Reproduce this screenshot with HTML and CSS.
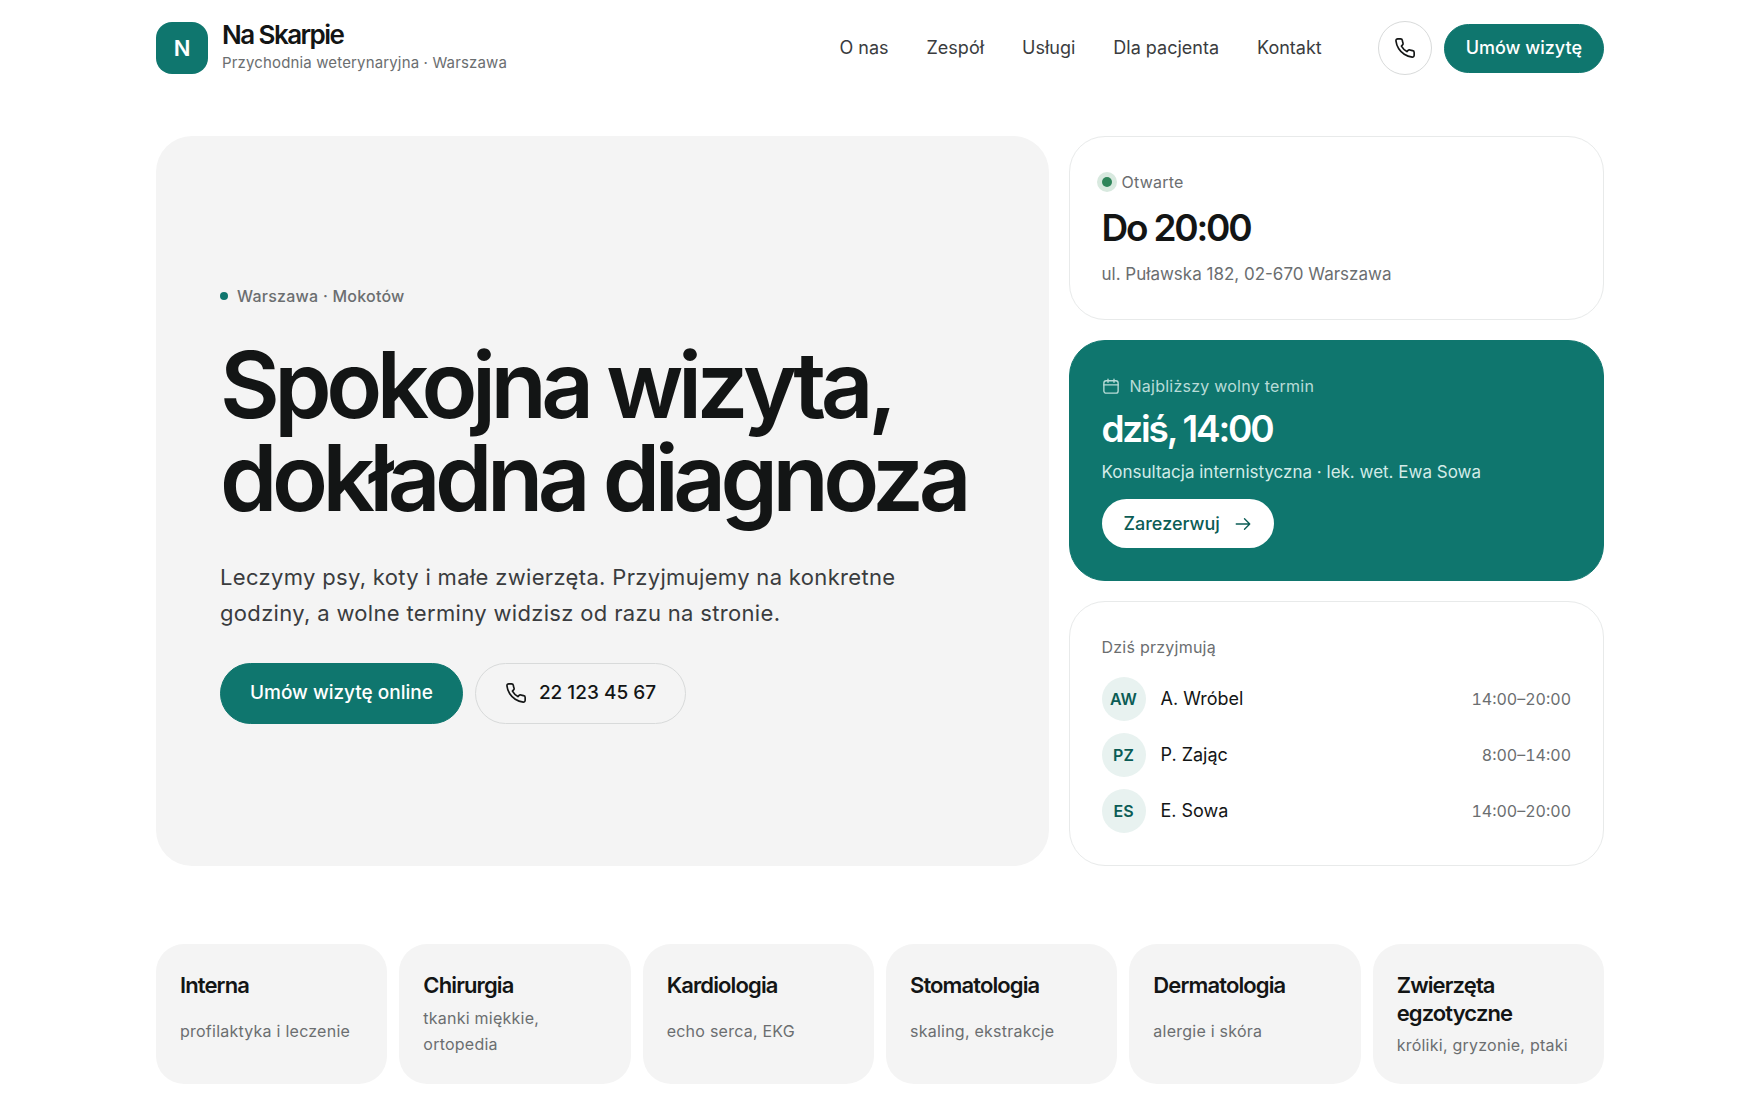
FILE: index.html
```html
<!DOCTYPE html>
<html lang="pl">
<head>
<meta charset="utf-8">
<meta name="viewport" content="width=device-width, initial-scale=1">
<title>Na Skarpie – przychodnia weterynaryjna</title>
<link rel="stylesheet" href="styles.css">
</head>
<body>
<svg class="sprite" aria-hidden="true">
  <symbol id="phone" viewBox="0 0 24 24"><path d="M22 16.92v3a2 2 0 0 1-2.18 2 19.79 19.79 0 0 1-8.63-3.07 19.5 19.5 0 0 1-6-6 19.79 19.79 0 0 1-3.07-8.67A2 2 0 0 1 4.11 2h3a2 2 0 0 1 2 1.72 12.84 12.84 0 0 0 .7 2.81 2 2 0 0 1-.45 2.11L8.09 9.91a16 16 0 0 0 6 6l1.27-1.27a2 2 0 0 1 2.11-.45 12.84 12.84 0 0 0 2.81.7A2 2 0 0 1 22 16.92z"/></symbol>
  <symbol id="calendar" viewBox="0 0 24 24"><rect x="2.5" y="5" width="19" height="16.5" rx="3"/><path d="M8 3v4M16 3v4M2.5 10.5h19"/></symbol>
  <symbol id="arrow" viewBox="0 0 24 24"><path d="M3 12h18M14 5l7 7-7 7"/></symbol>
</svg>
<header class="header container">
  <a class="brand" href="#">
    <span class="brand-mark">N</span>
    <span class="brand-text">
      <span class="brand-name">Na Skarpie</span>
      <span class="brand-sub">Przychodnia weterynaryjna · Warszawa</span>
    </span>
  </a>
  <nav class="nav">
    <a href="#o-nas">O nas</a>
    <a href="#zespol">Zespół</a>
    <a href="#uslugi">Usługi</a>
    <a href="#dla-pacjenta">Dla pacjenta</a>
    <a href="#kontakt">Kontakt</a>
  </nav>
  <div class="header-actions">
    <a class="icon-button" href="tel:+48221234567" aria-label="Zadzwoń"><svg class="icon icon-m"><use href="#phone"/></svg></a>
    <button class="button button-primary" type="button">Umów wizytę</button>
  </div>
</header>
<main class="container">
  <section class="top">
    <div class="hero">
      <p class="eyebrow">Warszawa · Mokotów</p>
      <h1>Spokojna wizyta, dokładna diagnoza</h1>
      <p class="lead">Leczymy psy, koty i małe zwierzęta. Przyjmujemy na konkretne godziny, a wolne terminy widzisz od razu na stronie.</p>
      <div class="hero-actions">
        <button class="button button-primary button-large" type="button">Umów wizytę online</button>
        <a class="button button-outline button-large" href="tel:+48221234567"><svg class="icon icon-m"><use href="#phone"/></svg>22 123 45 67</a>
      </div>
    </div>
    <div class="side">
      <article class="card">
        <p class="label label-status"><span class="status-dot"></span>Otwarte</p>
        <h2>Do 20:00</h2>
        <p class="detail">ul. Puławska 182, 02-670 Warszawa</p>
      </article>
      <article class="card card-accent">
        <p class="label"><svg class="icon icon-s"><use href="#calendar"/></svg>Najbliższy wolny termin</p>
        <h2>dziś, 14:00</h2>
        <p class="detail">Konsultacja internistyczna · lek. wet. Ewa Sowa</p>
        <button class="button button-light" type="button">Zarezerwuj<svg class="icon icon-s"><use href="#arrow"/></svg></button>
      </article>
      <article class="card card-team">
        <p class="label">Dziś przyjmują</p>
        <ul class="team">
          <li><span class="avatar">AW</span><span class="person">A. Wróbel</span><span class="hours">14:00–20:00</span></li>
          <li><span class="avatar">PZ</span><span class="person">P. Zając</span><span class="hours">8:00–14:00</span></li>
          <li><span class="avatar">ES</span><span class="person">E. Sowa</span><span class="hours">14:00–20:00</span></li>
        </ul>
      </article>
    </div>
  </section>
  <section class="services">
    <article class="service"><h3>Interna</h3><p>profilaktyka i leczenie</p></article>
    <article class="service"><h3>Chirurgia</h3><p>tkanki miękkie, ortopedia</p></article>
    <article class="service"><h3>Kardiologia</h3><p>echo serca, EKG</p></article>
    <article class="service"><h3>Stomatologia</h3><p>skaling, ekstrakcje</p></article>
    <article class="service"><h3>Dermatologia</h3><p>alergie i skóra</p></article>
    <article class="service"><h3>Zwierzęta egzotyczne</h3><p>króliki, gryzonie, ptaki</p></article>
  </section>
</main>
</body>
</html>
```
FILE: styles.css
```css
:root {
  --ink: #131515;
  --text: #3a3c3e;
  --muted: #6b6e70;
  --line: #e8eaea;
  --line-strong: #d8dada;
  --surface: #f4f4f4;
  --accent: #0f766e;
  --accent-soft: #e8f2f0;
}
* { box-sizing: border-box; }
body {
  margin: 0;
  background: #fff;
  color: var(--ink);
  font-family: Inter, "Liberation Sans", sans-serif;
  font-size: 18px;
  line-height: 26px;
}
h1, h2, h3, p, ul { margin: 0; padding: 0; }
a { color: inherit; text-decoration: none; }
.sprite { display: none; }
.container {
  width: calc(100% - 48px);
  max-width: 1448px;
  margin: 0 auto;
}
.icon {
  flex: none;
  fill: none;
  stroke: currentColor;
  stroke-width: 1.8;
  stroke-linecap: round;
  stroke-linejoin: round;
}
.icon-s { width: 18px; height: 18px; }
.icon-m { width: 22px; height: 22px; }

.header {
  display: flex;
  align-items: center;
  min-height: 96px;
}
.brand {
  display: flex;
  align-items: center;
  gap: 14px;
  margin-right: auto;
}
.brand-mark {
  display: grid;
  place-items: center;
  width: 52px;
  height: 52px;
  border-radius: 16px;
  background: var(--accent);
  color: #fff;
  font-size: 22px;
  font-weight: 600;
}
.brand-text { display: grid; }
.brand-name {
  font-size: 26px;
  line-height: 30px;
  font-weight: 600;
  letter-spacing: -0.06em;
}
.brand-sub {
  color: var(--muted);
  font-size: 15px;
  line-height: 26px;
  letter-spacing: 0.01em;
}
.nav {
  display: flex;
  gap: 38px;
  margin-right: 56px;
  color: var(--text);
}
.header-actions {
  display: flex;
  align-items: center;
  gap: 12px;
}
.icon-button {
  display: grid;
  place-items: center;
  width: 54px;
  height: 54px;
  border: 1px solid var(--line-strong);
  border-radius: 50%;
}
.button {
  display: inline-flex;
  align-items: center;
  justify-content: center;
  gap: 12px;
  min-height: 49px;
  padding: 0 21px;
  border: 1px solid transparent;
  border-radius: 999px;
  font: inherit;
  font-weight: 500;
  cursor: pointer;
}
.button-primary { background: var(--accent); border-color: var(--accent); color: #fff; }
.button-outline { border-color: var(--line-strong); }
.button-light { gap: 14px; background: #fff; color: #0b5c55; }
.button-large {
  min-height: 61px;
  padding: 0 29px;
  font-size: 19px;
}

.top {
  display: grid;
  grid-template-columns: 5fr 3fr;
  gap: 20px;
  padding-top: 40px;
}
.hero {
  display: flex;
  flex-direction: column;
  align-items: flex-start;
  justify-content: center;
  padding: 66px 64px 62px;
  border-radius: 36px;
  background: var(--surface);
}
.eyebrow {
  display: flex;
  align-items: center;
  gap: 9px;
  color: var(--muted);
  font-size: 16px;
  font-weight: 500;
  letter-spacing: 0.015em;
}
.eyebrow::before {
  content: "";
  width: 8px;
  height: 8px;
  border-radius: 50%;
  background: var(--accent);
}
h1 {
  margin-top: 29px;
  font-size: 92px;
  line-height: 93px;
  font-weight: 600;
  letter-spacing: -0.06em;
}
.lead {
  max-width: 700px;
  margin-top: 35px;
  color: var(--text);
  font-size: 22px;
  line-height: 36px;
  letter-spacing: 0.015em;
}
.hero-actions {
  display: flex;
  flex-wrap: wrap;
  gap: 12px;
  margin-top: 32px;
}

.side { display: grid; gap: 20px; }
.card {
  display: flex;
  flex-direction: column;
  align-items: flex-start;
  gap: 11px;
  padding: 32px;
  border: 1px solid var(--line);
  border-radius: 36px;
}
.label {
  display: flex;
  align-items: center;
  gap: 10px;
  color: var(--muted);
  font-size: 16px;
  letter-spacing: 0.015em;
}
.status-dot {
  width: 10px;
  height: 10px;
  border-radius: 50%;
  background: #2f855a;
  box-shadow: 0 0 0 5px #d8e9df;
}
h2 {
  font-size: 37px;
  line-height: 44px;
  font-weight: 600;
  letter-spacing: -0.06em;
}
.detail { color: var(--muted); font-size: 17px; }
.card-accent {
  gap: 8px;
  border-color: var(--accent);
  background: var(--accent);
  color: #fff;
}
.card-accent .label { color: #b9dcd8; }
.card-accent .detail { color: #d3ebe8; }
.card-accent .button { margin-top: 6px; }
.card-team { gap: 17px; }
.team {
  display: grid;
  gap: 12px;
  width: 100%;
  list-style: none;
}
.team li {
  display: flex;
  align-items: center;
  gap: 15px;
}
.avatar {
  display: grid;
  place-items: center;
  width: 44px;
  height: 44px;
  border-radius: 50%;
  background: var(--accent-soft);
  color: #0b5c55;
  font-size: 16px;
  font-weight: 600;
}
.hours {
  margin-left: auto;
  color: var(--muted);
  font-size: 16px;
  font-variant-numeric: tabular-nums;
}

.services {
  display: grid;
  grid-template-columns: repeat(6, 1fr);
  gap: 12px;
  padding: 78px 0 16px;
}
.service {
  display: grid;
  gap: 5px;
  padding: 27px 24px 26px;
  border-radius: 28px;
  background: var(--surface);
}
.service h3 {
  font-size: 22px;
  line-height: 28px;
  font-weight: 600;
  letter-spacing: -0.04em;
}
.service p {
  color: var(--muted);
  font-size: 16px;
  letter-spacing: 0.015em;
}

@media (max-width: 1100px) {
  .nav { display: none; }
  .top { grid-template-columns: 1fr; }
  .services { grid-template-columns: repeat(2, 1fr); }
  h1 { font-size: 56px; line-height: 60px; }
}
```
